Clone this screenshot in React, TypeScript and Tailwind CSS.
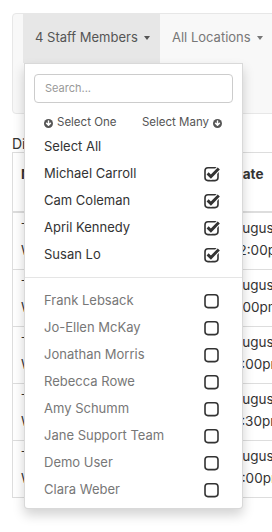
const checked = ["Michael Carroll", "Cam Coleman", "April Kennedy", "Susan Lo"];
const unchecked = [
  "Frank Lebsack",
  "Jo-Ellen McKay",
  "Jonathan Morris",
  "Rebecca Rowe",
  "Amy Schumm",
  "Jane Support Team",
  "Demo User",
  "Clara Weber",
];

const rows = [
  ["Today", "Wed", "August 19,", "12:00pm"],
  ["Today", "Wed", "August 19,", "1:00pm"],
  ["Today", "Wed", "August 19,", "3:00pm"],
  ["Today", "Wed", "August 19,", "2:30pm"],
  ["Today", "Wed", "August 19,", "4:00pm"],
];

function CircleDown() {
  return (
    <svg width="9" height="9" viewBox="0 0 16 16" className="shrink-0">
      <circle cx="8" cy="8" r="8" fill="#555" />
      <path d="M8 3.5v7M4.5 7.5 8 11l3.5-3.5" stroke="#fff" strokeWidth="2.6" fill="none" strokeLinecap="round" strokeLinejoin="round" />
    </svg>
  );
}

function Box({ on }: { on: boolean }) {
  return (
    <svg width="17" height="16" viewBox="0 0 17 16">
      <rect x="1" y="1.8" width="13" height="12.8" rx="3" fill="none" stroke="#333" strokeWidth="1.6" />
      {on && (
        <>
          <path d="M3.6 7.4 6.9 10.6 14.8 2.4" stroke="#fff" strokeWidth="5" fill="none" />
          <path d="M3.6 7.4 6.9 10.6 14.8 2.4" stroke="#333" strokeWidth="2.9" fill="none" />
        </>
      )}
    </svg>
  );
}

export default function App() {
  return (
    <div className="relative h-[532px] w-[272px] overflow-hidden bg-white font-['Inter',sans-serif] text-[13px] text-[#333]">
      <div className="ml-[12px] mt-[13px] h-[101px] w-[300px] rounded-[4px] border border-[#e7e7e7] bg-[#f8f8f8] pl-[10px]">
        <div className="flex h-[50px] -mt-px">
          <div className="flex w-[137px] items-center gap-[6px] bg-[#e7e7e7] pl-[12px] text-[#555]">
            4 Staff Members
            <span className="border-x-[3.5px] border-t-[4px] border-x-transparent border-t-[#555]" />
          </div>
          <div className="flex items-center gap-[6px] pl-[12px] text-[#777]">
            All Locations
            <span className="border-x-[3.5px] border-t-[4px] border-x-transparent border-t-[#777]" />
          </div>
        </div>
      </div>

      <div className="ml-[12px] mt-[22px] leading-[16px] text-[14px]">Display</div>

      <div className="ml-[12px] w-[300px] border-l border-t border-[#ddd] text-[13.5px]">
        <div className="flex h-[60px] border-b-2 border-[#ddd] pt-[11px] font-bold">
          <div className="w-[220px] pl-[8px]">Name</div>
          <div>Date</div>
        </div>
        {rows.map((r, i) => (
          <div key={i} className="flex h-[57px] border-b border-[#ddd] pt-[4px] leading-[22px]">
            <div className="w-[220px] pl-[8px]">
              <div>{r[0]}</div>
              <div>{r[1]}</div>
            </div>
            <div>
              <div>{r[2]}</div>
              <div>{r[3]}</div>
            </div>
          </div>
        ))}
      </div>

      <div className="absolute left-[24px] top-[63px] w-[219px] rounded-b-[4px] border border-[rgba(0,0,0,0.15)] bg-white px-[9px] pb-[5px] pt-[10px] shadow-[0_6px_12px_rgba(0,0,0,0.175)]">
        <div className="flex h-[29px] items-center rounded-[4px] border border-[#ccc] pl-[10px] text-[11px] text-[#999]">
          Search...
        </div>
        <div className="mt-[10px] flex h-[20px] items-center justify-between pl-[10px] pr-[11px] text-[11.5px] text-[#555]">
          <span className="flex items-center gap-[4px]">
            <CircleDown />
            Select One
          </span>
          <span className="flex items-center gap-[4px]">
            Select Many
            <CircleDown />
          </span>
        </div>
        <div className="flex h-[27px] items-center pl-[10px]">Select All</div>
        {checked.map((n) => (
          <div key={n} className="flex h-[27px] items-center justify-between pl-[10px] pr-[12px]">
            <span>{n}</span>
            <Box on />
          </div>
        ))}
        <div className="-mx-[9px] my-[9px] h-px bg-[#e5e5e5]" />
        {unchecked.map((n) => (
          <div key={n} className="flex h-[27px] items-center justify-between pl-[10px] pr-[12px] text-[#777]">
            <span>{n}</span>
            <Box on={false} />
          </div>
        ))}
      </div>
    </div>
  );
}
